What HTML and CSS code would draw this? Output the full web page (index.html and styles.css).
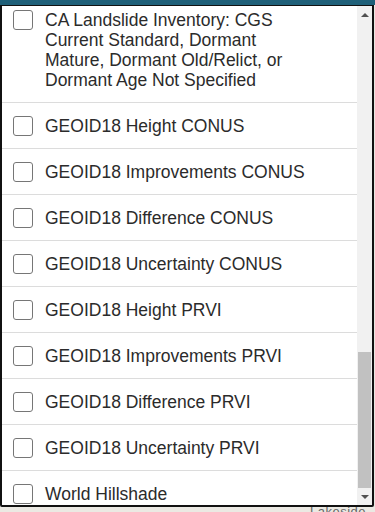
FILE: index.html
```html
<!DOCTYPE html>
<html>
<head>
<meta charset="utf-8">
<link rel="stylesheet" href="styles.css">
</head>
<body>
<div class="topbar"></div>
<div class="panel">
  <div class="list">
    <div class="items">
      <label class="row first"><span class="box"></span><span class="txt wrap">CA Landslide Inventory: CGS Current Standard, Dormant Mature, Dormant Old/Relict, or Dormant Age Not Specified</span></label>
      <label class="row"><span class="box"></span><span class="txt">GEOID18 Height CONUS</span></label>
      <label class="row"><span class="box"></span><span class="txt">GEOID18 Improvements CONUS</span></label>
      <label class="row"><span class="box"></span><span class="txt">GEOID18 Difference CONUS</span></label>
      <label class="row"><span class="box"></span><span class="txt">GEOID18 Uncertainty CONUS</span></label>
      <label class="row"><span class="box"></span><span class="txt">GEOID18 Height PRVI</span></label>
      <label class="row"><span class="box"></span><span class="txt">GEOID18 Improvements PRVI</span></label>
      <label class="row"><span class="box"></span><span class="txt">GEOID18 Difference PRVI</span></label>
      <label class="row"><span class="box"></span><span class="txt">GEOID18 Uncertainty PRVI</span></label>
      <label class="row"><span class="box"></span><span class="txt">World Hillshade</span></label>
    </div>
  </div>
  <div class="scrollbar">
    <div class="arrow up"></div>
    <div class="track"><div class="thumb"></div></div>
    <div class="arrow down"></div>
  </div>
</div>
<div class="map"><span class="maplabel">Lakeside</span></div>
</body>
</html>
```
FILE: styles.css
```css
html, body {
  margin: 0;
  padding: 0;
  background: #e9e7e1;
  font-family: "Liberation Sans", Arial, sans-serif;
  overflow: hidden;
}
.topbar {
  height: 5px;
  background: #1f6079;
}
.panel {
  width: 370px;
  height: 499px;
  border: 2px solid #111;
  border-top-width: 1px;
  background: #fff;
  display: flex;
  box-sizing: content-box;
  border-radius: 0 0 2px 2px;
}
.list {
  flex: 1;
  overflow: hidden;
}
.items {
  margin-top: -9px;
}
.row {
  display: flex;
  align-items: flex-start;
  gap: 12px;
  padding: 13px 0 12px 11px;
  border-bottom: 1px solid #dcdcdc;
  font-size: 17.5px;
  line-height: 20px;
  color: #2b2b2b;
}
.box {
  flex: none;
  width: 18px;
  height: 18px;
  border: 1px solid #767676;
  border-radius: 3px;
  background: #fff;
}
.txt {
  white-space: nowrap;
}
.txt.wrap {
  white-space: normal;
  max-width: 250px;
}
.scrollbar {
  width: 15px;
  background: #f1f1f1;
  display: flex;
  flex-direction: column;
}
.arrow {
  height: 17px;
  display: flex;
  align-items: center;
  justify-content: center;
}
.arrow.up::before {
  content: "";
  border-left: 4px solid transparent;
  border-right: 4px solid transparent;
  border-bottom: 4px solid #505050;
}
.arrow.down::before {
  content: "";
  border-left: 4px solid transparent;
  border-right: 4px solid transparent;
  border-top: 4px solid #505050;
}
.track {
  flex: 1;
  display: flex;
  flex-direction: column;
  justify-content: flex-end;
}
.thumb {
  height: 136px;
  margin: 0 1px 0 1px;
  background: #c1c1c1;
}
.map {
  height: 10px;
  position: relative;
  background: #ebe9e3;
}
.maplabel {
  position: absolute;
  left: 310px;
  top: -3px;
  font-size: 13px;
  color: #666;
  letter-spacing: 0.5px;
}
```
